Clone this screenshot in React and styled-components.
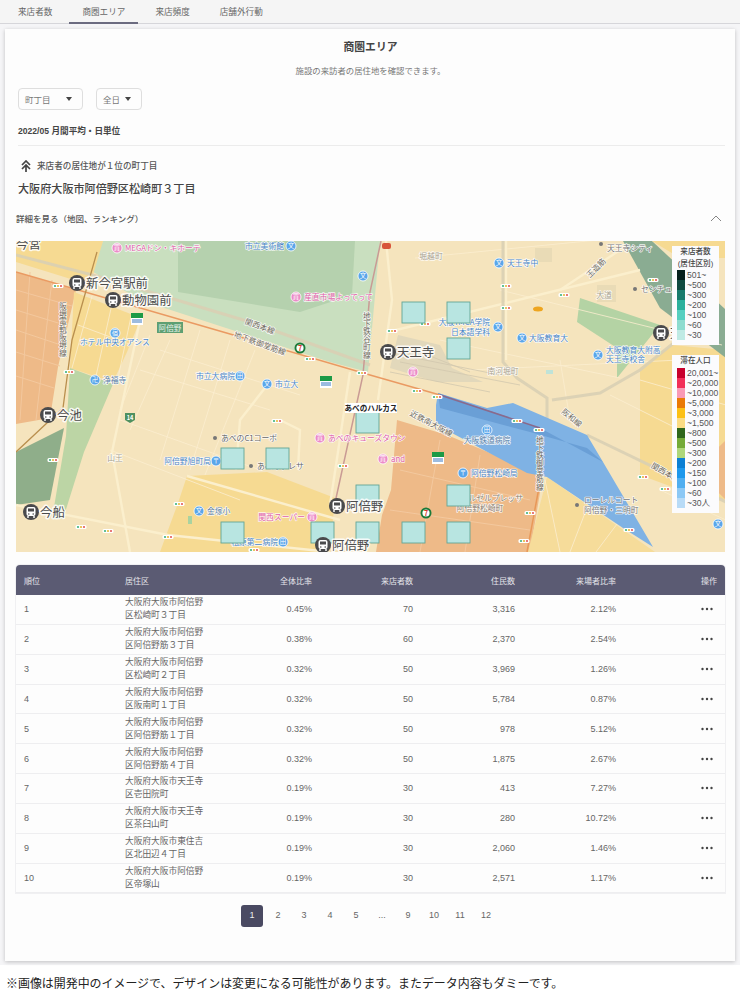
import styled, { createGlobalStyle } from "styled-components";

const GlobalStyle = createGlobalStyle`
  html, body {
    margin: 0;
    padding: 0;
    background: #fff;
  }
  * {
    box-sizing: border-box;
  }
  body {
    font-family: "Liberation Sans", "Noto Sans CJK JP", sans-serif;
    color: #555;
  }
`;

const Page = styled.div`
  width: 740px;
  height: 1000px;
  overflow: hidden;
  display: flex;
  flex-direction: column;
`;

const Main = styled.main`
  background: #f5f5f7;
  padding-bottom: 4px;
`;

const Tabs = styled.nav`
  display: flex;
  gap: 4px;
  height: 24px;
  padding-left: 5px;
  background: #f5f5f5;
  border-bottom: 1px solid #d6d6da;
`;

const Tab = styled.div`
  height: 24px;
  padding: 0 13px;
  font-size: 8.6px;
  line-height: 25px;
  color: #666;
  border-bottom: ${(p) => (p.$active ? "2px solid #6b6b80" : "none")};
`;

const Card = styled.section`
  margin: 5px 5px 0;
  height: 932px;
  padding: 0 10px 0 11px;
  background: #fdfdfd;
  box-shadow: 0 1px 4px rgba(0, 0, 0, 0.22);
`;

const Title = styled.h1`
  margin: 0;
  padding-top: 12px;
  font-size: 10.8px;
  line-height: 13px;
  font-weight: 700;
  text-align: center;
  color: #444;
`;

const Lead = styled.p`
  margin: 11px 0 0;
  font-size: 8.4px;
  line-height: 12px;
  text-align: center;
  color: #777;
`;

const Filters = styled.div`
  display: flex;
  gap: 13px;
  margin: 11px 0 0 2px;
`;

const Select = styled.div`
  display: flex;
  align-items: center;
  justify-content: space-between;
  width: ${(p) => p.$width}px;
  height: 22px;
  padding: 0 10px 0 6px;
  border: 1px solid #dedede;
  border-radius: 4px;
  font-size: 8.5px;
  color: #777;
`;

const Caret = styled.span`
  width: 0;
  height: 0;
  border-left: 3.5px solid transparent;
  border-right: 3.5px solid transparent;
  border-top: 4px solid #444;
`;

const Period = styled.div`
  margin: 15px 0 0 2px;
  height: 20px;
  font-size: 8.6px;
  line-height: 12px;
  font-weight: 700;
  color: #444;
`;

const Divider = styled.hr`
  margin: 0 0 0 2px;
  border: none;
  border-top: 1px solid #ececec;
`;

const TopLabel = styled.div`
  display: flex;
  align-items: center;
  gap: 6px;
  margin: 14px 0 0 5px;
  font-size: 8.6px;
  line-height: 12px;
  font-weight: 500;
  color: #555;
`;

const TopArea = styled.div`
  margin: 9px 0 0 2px;
  font-size: 11.1px;
  line-height: 16px;
  font-weight: 500;
  color: #444;
`;

const Details = styled.div`
  display: flex;
  align-items: center;
  justify-content: space-between;
  margin-top: 14px;
  padding-right: 3px;
  height: 14px;
  font-size: 8.5px;
  font-weight: 500;
  color: #555;
`;

const MapFrame = styled.div`
  position: relative;
  margin-top: 16px;
  width: 709px;
  height: 311px;
  overflow: hidden;
  background: #f5e4bd;
`;

const MapSvg = styled.svg`
  display: block;
  width: 709px;
  height: 311px;
  font-family: "Noto Sans CJK JP", sans-serif;
`;

const Legend = styled.div`
  position: absolute;
  left: 656px;
  top: ${(p) => p.$top}px;
  width: 47px;
  padding: 0 2px 5px 5px;
  background: #fbfbfd;
`;

const LegendTitle = styled.div`
  margin-left: -3px;
  font-size: 7.6px;
  line-height: 11.5px;
  font-weight: 500;
  text-align: center;
  color: #444;
`;

const LegendList = styled.div`
  margin-top: 1px;
`;

const LegendRow = styled.div`
  display: flex;
  align-items: center;
  gap: 2px;
  height: 10px;
  font-size: 8.6px;
  line-height: 10px;
  white-space: nowrap;
  color: #555;
`;

const Swatch = styled.span`
  flex: none;
  width: 8px;
  height: 10px;
  background: ${(p) => p.$color};
`;

const Table = styled.div`
  margin-top: 13px;
  border-radius: 4px 4px 0 0;
  box-shadow: 0 0 0 1px #f0f0f2;
`;

const Row = styled.div`
  display: grid;
  grid-template-columns: 101px 92px 95px 101px 102px 101px 101px;
  align-items: center;
  height: 29.85px;
  padding: 0 8px;
  font-size: 9px;
  color: #666;
  border-bottom: 1px solid #eeeef0;
`;

const HeadRow = styled(Row)`
  height: 30px;
  font-size: 8px;
  color: #e4e4ea;
  background: #5b5b73;
  border-bottom: none;
  border-radius: 4px 4px 0 0;
`;

const Address = styled.div`
  width: 80px;
  font-size: 8.7px;
  line-height: 13px;
`;

const Num = styled.div`
  text-align: right;
`;

const Dots = styled.svg`
  display: block;
  width: 12px;
  height: 4px;
  margin-left: auto;
  margin-right: 4px;
`;

const Pager = styled.div`
  display: flex;
  justify-content: center;
  gap: 4px;
  margin: 12px 3px 0 0;
`;

const PageNo = styled.div`
  width: 22px;
  height: 22px;
  border-radius: 3px;
  font-size: 9px;
  line-height: 21px;
  text-align: center;
  color: ${(p) => (p.$active ? "#eee" : "#666")};
  background: ${(p) => (p.$active ? "#4a4a62" : "transparent")};
`;

const Note = styled.p`
  margin: 0;
  padding: 9px 0 0 6px;
  font-family: "Noto Sans CJK JP", sans-serif;
  font-size: 11.95px;
  line-height: 17px;
  color: #222;
  white-space: nowrap;
`;

const Halo = styled.text`
  paint-order: stroke;
  stroke: rgba(255, 255, 255, 0.85);
  stroke-width: ${(p) => p.$halo || 1.5}px;
  stroke-linejoin: round;
`;

const rows = [
  ["1", "大阪府大阪市阿倍野区松崎町３丁目", "0.45%", "70", "3,316", "2.12%"],
  ["2", "大阪府大阪市阿倍野区阿倍野筋３丁目", "0.38%", "60", "2,370", "2.54%"],
  ["3", "大阪府大阪市阿倍野区松崎町２丁目", "0.32%", "50", "3,969", "1.26%"],
  ["4", "大阪府大阪市阿倍野区阪南町１丁目", "0.32%", "50", "5,784", "0.87%"],
  ["5", "大阪府大阪市阿倍野区阿倍野筋１丁目", "0.32%", "50", "978", "5.12%"],
  ["6", "大阪府大阪市阿倍野区阿倍野筋４丁目", "0.32%", "50", "1,875", "2.67%"],
  ["7", "大阪府大阪市天王寺区壱田院町", "0.19%", "30", "413", "7.27%"],
  ["8", "大阪府大阪市天王寺区茶臼山町", "0.19%", "30", "280", "10.72%"],
  ["9", "大阪府大阪市東住吉区北田辺４丁目", "0.19%", "30", "2,060", "1.46%"],
  ["10", "大阪府大阪市阿倍野区帝塚山", "0.19%", "30", "2,571", "1.17%"],
];

const visitorLegend = [
  ["#06201c", "501~"],
  ["#0f4a40", "~500"],
  ["#187a6b", "~300"],
  ["#2bb09c", "~200"],
  ["#56cfc0", "~100"],
  ["#8edccf", "~60"],
  ["#bfeae4", "~30"],
];

const populationLegend = [
  ["#c8002c", "20,001~"],
  ["#f22f58", "~20,000"],
  ["#f99ab5", "~10,000"],
  ["#ea7a05", "~5,000"],
  ["#fcc016", "~3,000"],
  ["#fbdc84", "~1,500"],
  ["#2f661b", "~800"],
  ["#74aa38", "~500"],
  ["#aed67a", "~300"],
  ["#0b7fd4", "~200"],
  ["#1e98ec", "~150"],
  ["#50aef0", "~100"],
  ["#8cc8f5", "~60"],
  ["#b8dbf7", "~30人"],
];

const areas = [
  ["#c9dfbf", "103,241 380,241 368,372 330,362 140,300 90,270"],
  ["#b5d1ae", "178,241 355,241 352,295 300,312 178,292"],
  ["#eeba88", "16,272 76,290 58,367 50,418 16,424"],
  ["#f6da92", "16,241 103,241 90,285 16,262"],
  ["#f6da92", "74,292 141,318 127,352 113,382 70,368"],
  ["#bcd5a5", "70,368 113,384 84,452 63,519 52,519 66,436"],
  ["#8fae8a", "16,452 64,428 50,500 16,505"],
  ["#f6da92", "187,476 267,472 335,498 330,552 160,552 178,503"],
  ["#eeba88", "397,420 447,435 543,475 530,552 376,552 382,515 391,490"],
  ["#f6dc9a", "547,477 655,552 528,552"],
  ["#f6da92", "640,368 672,345 726,350 726,500 675,488 640,475"],
  ["#8aac92", "623,241 652,241 726,310 726,358 660,308"],
  ["#f6da92", "652,241 726,241 726,258 680,258"],
  ["#b4d3a4", "580,298 660,325 617,378 617,348 577,322"],
  ["#eeba88", "695,470 726,440 726,500"],
  ["#e2d8bb", "398,335 440,345 452,368 483,382 437,382 390,368"],
  ["#e9dbb6", "535,248 552,248 552,262 535,262"],
  ["#e9dbb6", "597,285 616,285 616,302 597,302"],
  ["#bfe3d8", "546,370 553,370 553,374 546,374"],
  ["#a9d3a0", "188,516 192,516 192,524 188,524"],
];

const orangeBlocks = [
  "16,290 72,306", "16,310 68,326", "16,330 64,346", "16,352 60,366", "16,376 54,388",
  "30,272 20,420", "52,280 36,420",
  "400,470 530,500", "390,510 530,530", "440,440 420,552", "480,455 465,552",
];

const blocks = [
  "92,296 72,368", "112,304 96,376", "132,312 118,378", "78,325 132,345",
  "150,335 120,410", "170,340 130,430", "200,330 160,460", "230,340 190,470", "255,350 205,475",
  "120,420 260,470", "110,450 240,500", "140,370 270,410", "160,350 300,395",
  "415,258 598,240", "500,290 722,345", "440,340 620,378",
  "560,360 570,420", "470,370 680,360", "610,395 700,440", "640,380 726,405",
  "545,480 560,552", "590,500 570,552", "620,520 596,552", "660,490 726,520",
];

const roads = [
  "16,505 168,535 330,552", "140,320 112,452 130,552", "187,476 340,520",
  "268,384 240,420 236,470", "350,372 330,505", "386,241 392,300 378,400",
  "280,420 300,430 298,470", "392,331 640,270", "560,290 620,250",
  "506,241 506,360",
];

const greyRails = [
  "503,241 503,362 517,378 547,398 547,470",
  "552,400 600,393 640,370 690,330",
  "587,435 726,502",
  "16,255 100,277 250,322 370,365",
];

const stationTracks = [
  "400,362 520,385", "405,356 500,375", "415,350 470,372", "390,372 490,392",
];

const squares = [
  [221, 448], [266, 448], [221, 522], [311, 522], [356, 522], [356, 485], [356, 412],
  [402, 302], [447, 302], [447, 338], [447, 485], [402, 522], [447, 522],
];

const signals = [
  [58, 286], [69, 372], [53, 460], [81, 527], [108, 531], [168, 537], [179, 504], [277, 421],
  [310, 359], [362, 373], [343, 466], [254, 550], [392, 331], [425, 324], [506, 286], [506, 308],
  [564, 295], [653, 280], [417, 391], [437, 397], [517, 421], [539, 430], [643, 477], [665, 489],
  [629, 530], [530, 513], [524, 541],
];

const stations = [
  [77, 283, "新今宮駅前"], [113, 300, "動物園前"], [48, 415, "今池"], [31, 512, "今船"],
  [337, 506, "阿倍野"], [323, 545, "阿倍野"], [388, 352, "天王寺"], [661, 333, "天"],
];

const blue = "#4a86c8";
const pink = "#e060a8";

// icon, icon position, label position, anchor, colour, text
const pois = [
  ["blue", 291, 246, 284, "end", blue, "市立美術館", "文"],
  ["pink", 117, 248, 125, "start", pink, "MEGAドン・キホーテ", "買"],
  ["pink", 296, 297, 304, "start", pink, "産直市場よってって", "買"],
  ["blue", 115, 333, 115, "middle", blue, "", "宿"],
  ["blue", 95, 380, 103, "start", "#5a7fa8", "浄福寺", "卍"],
  ["blue", 240, 376, 235, "end", blue, "市立大病院", "田"],
  ["blue", 267, 384, 275, "start", blue, "市立大", "文"],
  ["pink", 320, 438, 328, "start", pink, "あべのキューズタウン", "買"],
  ["blue", 216, 461, 211, "end", blue, "阿倍野旭町局", "〒"],
  ["blue", 199, 511, 207, "start", "#5a7fa8", "金塚小", "文"],
  ["pink", 312, 517, 305, "end", pink, "関西スーパー", "買"],
  ["blue", 283, 542, 278, "end", blue, "松原第二病院", "田"],
  ["blue", 363, 276, 363, "middle", blue, "", "文"],
  ["blue", 499, 263, 507, "start", blue, "天王寺中", "文"],
  ["blue", 522, 338, 529, "start", blue, "大阪教育大", "文"],
  ["blue", 498, 327, 498, "middle", blue, "", "文"],
  ["blue", 598, 355, 598, "middle", blue, "", "文"],
  ["pink", 413, 372, 413, "middle", pink, "", "買"],
  ["pink", 383, 459, 391, "start", pink, "and", "買"],
  ["blue", 463, 473, 471, "start", blue, "阿倍野松崎局", "〒"],
  ["blue", 487, 430, 487, "middle", blue, "", "田"],
  ["blue", 718, 524, 718, "middle", blue, "", "文"],
];

const mapTexts = [
  [115, 345, "ホテル中央オアシス", blue, "middle"],
  [490, 325, "大阪YMCA学院", blue, "end"],
  [490, 335, "日本語学科", blue, "end"],
  [606, 353, "大阪教育大附高", blue, "start"],
  [606, 362, "天王寺校舎", blue, "start"],
  [221, 441, "あべのC1コーポ", "#666", "start"],
  [257, 469, "あべのプレサ", "#666", "start"],
  [115, 461, "山王", "#a89f8c", "middle"],
  [431, 259, "堀越町", "#a89f8c", "middle"],
  [604, 298, "大道", "#a89f8c", "middle"],
  [503, 374, "南河堀町", "#a89f8c", "middle"],
  [607, 251, "天王寺シティ", "#777", "start"],
  [641, 292, "センチュ", "#777", "start"],
  [487, 443, "大阪鉄道病院", "#5580a8", "middle"],
  [488, 501, "ホテルゼルプレッサ", "#8a8070", "middle"],
  [480, 511, "阿倍野松崎町", "#8a8070", "middle"],
  [584, 503, "ローレルコート", "#777", "start"],
  [584, 513, "阿倍野・三明町", "#777", "start"],
];

const lineTexts = [
  [259, 329, "関西本線", 20],
  [259, 346, "地下鉄御堂筋線", 20],
  [598, 270, "玉造筋", -45],
  [430, 426, "近鉄南大阪線", 28],
  [570, 420, "阪和線", 40],
  [664, 475, "関西本線", 30],
];

const verticalTexts = [
  [63, 302, "阪堺電軌阪堺線"],
  [367, 312, "地下鉄谷町線"],
  [540, 436, "地下鉄御堂筋線"],
];

function Station({ x, y, label }) {
  return (
    <g>
      <circle cx={x} cy={y} r="8" fill="#4a4a4c" />
      <rect x={x - 4.5} y={y - 5} width="9" height="9" rx="2" fill="#fff" />
      <rect x={x - 3} y={y - 3.5} width="6" height="3" fill="#4a4a4c" />
      <circle cx={x - 2.2} cy={y + 2} r="0.8" fill="#4a4a4c" />
      <circle cx={x + 2.2} cy={y + 2} r="0.8" fill="#4a4a4c" />
      <path d={`M${x - 3} ${y + 4}v2M${x + 3} ${y + 4}v2`} stroke="#fff" strokeWidth="1.4" />
      <Halo $halo={3} x={x + 9} y={y + 4.5} fontSize="12.4" fill="#4c4c4c">
        {label}
      </Halo>
    </g>
  );
}

function Poi({ x, y, labelX, anchor, color, label, glyph, kind }) {
  return (
    <g>
      <circle cx={x} cy={y} r="5" fill={kind === "pink" ? "#ec8ac8" : "#5aa6ea"} stroke="#fff" strokeWidth="0.8" />
      <text x={x} y={y + 2.4} fontSize="6.4" fill="#fff" textAnchor="middle">
        {glyph}
      </text>
      {label && (
        <Halo x={labelX} y={y + 2.8} fontSize="7.8" fill={color} textAnchor={anchor}>
          {label}
        </Halo>
      )}
    </g>
  );
}

function Signal({ x, y }) {
  return (
    <g>
      <rect x={x - 5.5} y={y - 2} width="11" height="4" rx="1.5" fill="#fff" />
      <circle cx={x - 3} cy={y} r="1.1" fill="#3fb37f" />
      <circle cx={x} cy={y} r="1.1" fill="#e8b93a" />
      <circle cx={x + 3} cy={y} r="1.1" fill="#e35a5a" />
    </g>
  );
}

function Konbini({ x, y }) {
  return (
    <g>
      <rect x={x - 6} y={y - 6} width="12" height="12" fill="#fff" />
      <rect x={x - 6} y={y - 6} width="12" height="5" fill="#1c9a46" />
      <path d={`M${x - 5} ${y + 1}h10M${x - 5} ${y + 3}h10`} stroke="#3a78c0" strokeWidth="1" />
    </g>
  );
}

function Seven({ x, y }) {
  return (
    <g>
      <circle cx={x} cy={y} r="5.5" fill="#1c7a3a" />
      <circle cx={x} cy={y} r="3.6" fill="#fff" />
      <text x={x} y={y + 2.6} fontSize="7" fontWeight="700" fill="#d8352a" textAnchor="middle">
        7
      </text>
    </g>
  );
}

function AreaMap() {
  return (
    <MapSvg viewBox="16 241 709 311">
      <rect x="16" y="241" width="709" height="311" fill="#f5e4bd" />
      {areas.map(([fill, points]) => (
        <polygon key={points} points={points} fill={fill} />
      ))}
      {orangeBlocks.map((points) => (
        <polyline key={points} points={points} fill="none" stroke="#f3c89e" strokeWidth="1" />
      ))}
      {blocks.map((points) => (
        <polyline key={points} points={points} fill="none" stroke="#fbeed0" strokeWidth="1" opacity="0.8" />
      ))}
      {roads.map((points) => (
        <polyline key={points} points={points} fill="none" stroke="#fbefcd" strokeWidth="2.4" />
      ))}
      {greyRails.map((points) => (
        <polyline key={points} points={points} fill="none" stroke="#d9cfb4" strokeWidth="3" opacity="0.9" />
      ))}
      {stationTracks.map((points) => (
        <polyline key={points} points={points} fill="none" stroke="#d2c8ae" strokeWidth="0.8" />
      ))}
      <polygon
        points="438,393 487,408 513,403 587,435 603,462 653,547 623,528 547,477 527,473 450,432 436,422 436,405"
        fill="#7fb2e4"
      />
      <polygon points="438,393 540,428 603,462 587,448 530,432 440,408" fill="#6a9fd6" />
      <polyline points="16,272 230,334 370,375 440,395" fill="none" stroke="#ea9a62" strokeWidth="1.5" />
      <polyline points="440,395 540,428" fill="none" stroke="#8a6a8c" strokeWidth="1.5" />
      <polyline points="381,241 370,292 363,375 333,512" fill="none" stroke="#c99a94" strokeWidth="1.5" />
      <polyline points="540,482 527,552" fill="none" stroke="#e89858" strokeWidth="1.5" />
      <polyline points="97,252 72,340 63,408 16,452" fill="none" stroke="#b98f4e" strokeWidth="1.3" />

      {signals.map(([x, y]) => (
        <Signal key={`${x}-${y}`} x={x} y={y} />
      ))}

      <rect x="157" y="322" width="26" height="11" fill="#5e9f72" />
      <text x="170" y="330.5" fontSize="7.6" fill="#e6f2e8" textAnchor="middle">
        阿倍野
      </text>
      <path d="M125 413h10v7l-5 3-5-3z" fill="#4e9060" />
      <text x="130" y="420" fontSize="5.6" fontWeight="700" fill="#fff" textAnchor="middle">
        14
      </text>
      <Konbini x={137} y={319} />
      <Konbini x={326} y={382} />
      <Konbini x={438} y={458} />
      <Seven x={300} y={348} />
      <Seven x={426} y={513} />
      <ellipse cx="538" cy="309" rx="5" ry="2.5" fill="#eea51f" />
      <rect x="382" y="243" width="9" height="6" rx="2" fill="#d8553a" />
      <circle cx="215" cy="438" r="2" fill="#777" />
      <circle cx="251" cy="466" r="2" fill="#777" />
      <circle cx="601" cy="244" r="2" fill="#777" />
      <circle cx="635" cy="289" r="2" fill="#777" />
      <circle cx="577" cy="505" r="2" fill="#777" />

      {mapTexts.map(([x, y, text, color, anchor]) => (
        <Halo key={text} x={x} y={y} fontSize="7.8" fill={color} textAnchor={anchor}>
          {text}
        </Halo>
      ))}
      {lineTexts.map(([x, y, text, angle]) => (
        <Halo
          key={`${text}-${x}`}
          x={x}
          y={y}
          fontSize="7.8"
          fill="#6e6a60"
          textAnchor="middle"
          transform={`rotate(${angle} ${x} ${y})`}
        >
          {text}
        </Halo>
      ))}
      {verticalTexts.map(([x, y, text]) => (
        <Halo key={`${text}-${x}`} x={x} y={y} fontSize="7.8" fill="#6e6a60" style={{ writingMode: "vertical-rl" }}>
          {text}
        </Halo>
      ))}
      {pois.map(([kind, x, y, labelX, anchor, color, label, glyph]) => (
        <Poi
          key={`${x}-${y}`}
          kind={kind}
          x={x}
          y={y}
          labelX={labelX}
          anchor={anchor}
          color={color}
          label={label}
          glyph={glyph}
        />
      ))}
      <Halo $halo={3} x="16" y="249" fontSize="12.4" fill="#4c4c4c">
        今宮
      </Halo>
      {squares.map(([x, y]) => (
        <rect key={`${x}-${y}`} x={x} y={y} width="23" height="21" fill="#b8e5e1" stroke="#63a596" strokeWidth="0.9" />
      ))}
      {stations.map(([x, y, label]) => (
        <Station key={`${x}-${y}`} x={x} y={y} label={label} />
      ))}
      <rect x="345" y="403" width="52" height="10" fill="#fff" />
      <text x="371" y="411" fontSize="7.6" fontWeight="700" fill="#222" textAnchor="middle">
        あべのハルカス
      </text>
    </MapSvg>
  );
}

function MapLegend({ top, title, items }) {
  return (
    <Legend $top={top}>
      {title.map((line) => (
        <LegendTitle key={line}>{line}</LegendTitle>
      ))}
      <LegendList>
        {items.map(([color, label]) => (
          <LegendRow key={label}>
            <Swatch $color={color} />
            {label}
          </LegendRow>
        ))}
      </LegendList>
    </Legend>
  );
}

export default function App() {
  return (
    <Page>
      <GlobalStyle />
      <Main>
        <Tabs>
          <Tab>来店者数</Tab>
          <Tab $active>商圏エリア</Tab>
          <Tab>来店頻度</Tab>
          <Tab>店舗外行動</Tab>
        </Tabs>
        <Card>
          <Title>商圏エリア</Title>
          <Lead>施設の来訪者の居住地を確認できます。</Lead>
          <Filters>
            <Select $width={65}>
              町丁目
              <Caret />
            </Select>
            <Select $width={46}>
              全日
              <Caret />
            </Select>
          </Filters>
          <Period>2022/05 月間平均・日単位</Period>
          <Divider />
          <TopLabel>
            <svg width="10" height="12" viewBox="0 0 10 12" fill="none" stroke="#444" strokeWidth="1.7">
              <path d="M1 5l4-4 4 4M1 9l4-4 4 4M5 6v6" />
            </svg>
            来店者の居住地が１位の町丁目
          </TopLabel>
          <TopArea>大阪府大阪市阿倍野区松崎町３丁目</TopArea>
          <Details>
            詳細を見る（地図、ランキング）
            <svg width="12" height="7" viewBox="0 0 12 7" fill="none" stroke="#777" strokeWidth="0.9">
              <path d="M1 6l5-5 5 5" />
            </svg>
          </Details>
          <MapFrame>
            <AreaMap />
            <MapLegend top={5} title={["来店者数", "(居住区別)"]} items={visitorLegend} />
            <MapLegend top={114} title={["滞在人口"]} items={populationLegend} />
          </MapFrame>
          <Table>
            <HeadRow>
              <div>順位</div>
              <div>居住区</div>
              <Num>全体比率</Num>
              <Num>来店者数</Num>
              <Num>住民数</Num>
              <Num>来場者比率</Num>
              <Num>操作</Num>
            </HeadRow>
            {rows.map(([rank, address, share, visitors, residents, rate]) => (
              <Row key={rank}>
                <div>{rank}</div>
                <Address>{address}</Address>
                <Num>{share}</Num>
                <Num>{visitors}</Num>
                <Num>{residents}</Num>
                <Num>{rate}</Num>
                <Dots viewBox="0 0 12 4" fill="#444">
                  <circle cx="1.5" cy="2" r="1.2" />
                  <circle cx="6" cy="2" r="1.2" />
                  <circle cx="10.5" cy="2" r="1.2" />
                </Dots>
              </Row>
            ))}
          </Table>
          <Pager>
            {["1", "2", "3", "4", "5", "...", "9", "10", "11", "12"].map((no) => (
              <PageNo key={no} $active={no === "1"}>
                {no}
              </PageNo>
            ))}
          </Pager>
        </Card>
      </Main>
      <Note>※画像は開発中のイメージで、デザインは変更になる可能性があります。またデータ内容もダミーです。</Note>
    </Page>
  );
}
